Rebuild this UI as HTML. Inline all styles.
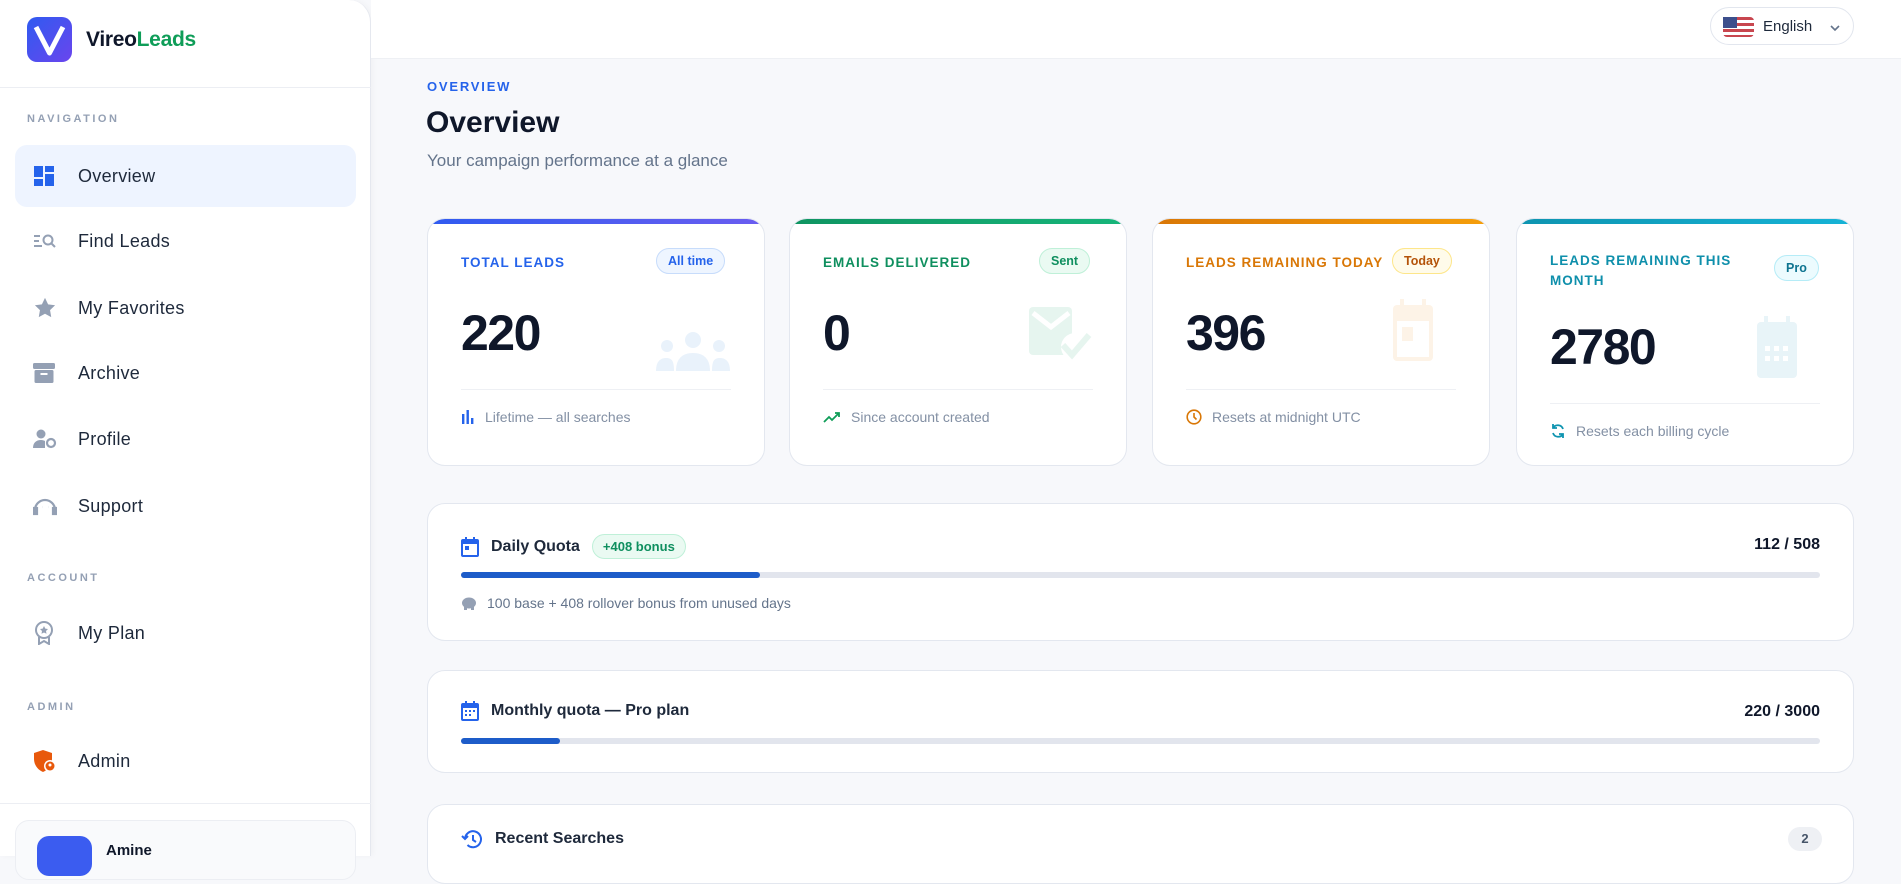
<!DOCTYPE html>
<html><head><meta charset="utf-8"><style>
*{box-sizing:border-box;margin:0;padding:0}
body{width:1901px;height:856px;overflow:hidden;background:#f7f8fb;font-family:"Liberation Sans",Arial,sans-serif;color:#0f172a;position:relative}
.side{position:absolute;left:0;top:0;width:371px;height:856px;background:#fff;border-right:1px solid #e5e8ef;border-radius:0 22px 0 0;box-shadow:2px 0 6px rgba(0,0,0,.03)}
.logo{position:absolute;left:27px;top:17px;width:45px;height:45px;border-radius:10px;background:linear-gradient(135deg,#2f5bf0,#6a45ee)}
.brand{position:absolute;left:86px;top:28px;font-size:21px;font-weight:700;letter-spacing:-.3px}
.sep{position:absolute;left:0;width:371px;height:1px;background:#eceef3}
.lbl{position:absolute;left:27px;font-size:11px;font-weight:700;letter-spacing:2.5px;color:#94a0b4}
.item{position:absolute;left:15px;width:341px;height:62px;border-radius:12px;display:flex;align-items:center;font-size:18px;color:#1e293b;letter-spacing:.3px}
.item.act{background:#eef4ff}
.item svg{position:absolute;left:18px}
.item span{position:absolute;left:63px}
.top{position:absolute;left:371px;top:0;right:0;height:59px;background:#fff;border-bottom:1px solid #eef0f4}
.lang{position:absolute;left:1710px;top:7px;width:144px;height:38px;border:1px solid #e2e6ee;border-radius:19px;background:#fff;font-size:15px;color:#1e293b}
.card{position:absolute;background:#fff;border:1px solid #e3e7ef;border-radius:18px;overflow:hidden}
.card .bar{position:absolute;left:0;right:0;top:0;height:5px}
.clabel{position:absolute;left:33px;font-size:13.5px;font-weight:700;letter-spacing:1px}
.pill{position:absolute;font-size:12.5px;font-weight:700;border-radius:13px;padding:5px 11px;border:1px solid}
.num{position:absolute;left:33px;font-size:50px;font-weight:700;letter-spacing:-1.5px;color:#0f172a}
.div{position:absolute;left:33px;right:33px;height:1px;background:#eef0f4}
.foot{position:absolute;left:33px;font-size:14px;color:#8390a4;display:flex;align-items:center;gap:10px}
.wide .t{position:absolute;left:33px;font-size:16px;font-weight:700;color:#1e293b;display:flex;align-items:center;gap:12px}
.track{position:absolute;left:33px;right:33px;height:6px;background:#e2e5ed;border-radius:3px}
.fill{height:6px;background:#1d5cc9;border-radius:3px}
</style></head><body>
<div class="side">
<div class="logo"><svg width="45" height="45" viewBox="0 0 45 45"><path d="M9 10 L22.5 36 L36 10" fill="none" stroke="#fff" stroke-width="5" stroke-linejoin="round"/></svg></div>
<div class="brand">Vireo<span style="color:#0f9d58">Leads</span></div>
<div class="sep" style="top:87px"></div>
<div class="lbl" style="top:113px">NAVIGATION</div>
<div class="item act" style="top:145px"><svg width="22" height="22" viewBox="0 0 22 22" fill="#2563eb"><rect x="1" y="1" width="9" height="11"/><rect x="12" y="1" width="9" height="6"/><rect x="1" y="14" width="9" height="7"/><rect x="12" y="9" width="9" height="12"/></svg><span>Overview</span></div>
<div class="item" style="top:210px"><svg width="24" height="16" viewBox="0 0 24 16" fill="none" stroke="#94a0b4" stroke-width="2"><path d="M1 3h6M1 8h5M1 13h8"/><circle cx="15" cy="7" r="4.5"/><path d="M18 10l4 4"/></svg><span>Find Leads</span></div>
<div class="item" style="top:277px"><svg width="24" height="22" viewBox="0 0 24 24" fill="#94a0b4"><path d="M12 1l3.4 7 7.6 1-5.5 5.3 1.3 7.7L12 18.3 5.2 22l1.3-7.7L1 9l7.6-1z"/></svg><span>My Favorites</span></div>
<div class="item" style="top:342px"><svg width="22" height="22" viewBox="0 0 22 22" fill="#94a0b4"><rect x="0" y="1" width="22" height="6" rx="1.5"/><rect x="1.5" y="8" width="19" height="13" rx="1.5"/><rect x="7.5" y="11" width="7" height="2" fill="#fff"/></svg><span>Archive</span></div>
<div class="item" style="top:408px"><svg width="24" height="20" viewBox="0 0 24 20" fill="#94a0b4"><circle cx="8" cy="5" r="4.5"/><path d="M0 19c0-5 3-8 8-8 2 0 3 .5 4 1v7z"/><circle cx="18" cy="14" r="4" fill="none" stroke="#94a0b4" stroke-width="2.2"/></svg><span>Profile</span></div>
<div class="item" style="top:475px"><svg width="24" height="20" viewBox="0 0 24 20" fill="none" stroke="#94a0b4" stroke-width="2.2"><path d="M2 14a10 10 0 0 1 20 0"/><rect x="1" y="12" width="3" height="6" fill="#94a0b4"/><rect x="20" y="12" width="3" height="6" fill="#94a0b4"/><path d="M9 11h.1M15 11h.1"/></svg><span>Support</span></div>
<div class="lbl" style="top:572px">ACCOUNT</div>
<div class="item" style="top:602px"><svg width="22" height="24" viewBox="0 0 22 24" fill="none" stroke="#94a0b4" stroke-width="2"><circle cx="11" cy="9" r="8"/><path d="M6 16v7l5-3 5 3v-7"/><path d="M11 5l1.3 2.6 2.7.4-2 2 .5 2.8L11 11.5 8.5 12.8 9 10 7 8l2.7-.4z" fill="#94a0b4" stroke="none"/></svg><span>My Plan</span></div>
<div class="lbl" style="top:701px">ADMIN</div>
<div class="item" style="top:730px"><svg width="24" height="22" viewBox="0 0 24 22" fill="#e8590c"><path d="M10 0l9 3v6c0 6-4 11-9 13C5 20 1 15 1 9V3z"/><circle cx="17" cy="16" r="6" fill="#fff"/><circle cx="17" cy="16" r="4.5"/><circle cx="17" cy="15" r="1.5" fill="#fff"/></svg><span>Admin</span></div>
<div class="sep" style="top:803px"></div>
<div style="position:absolute;left:15px;top:820px;width:341px;height:60px;border:1px solid #eceef3;border-radius:14px;background:#f9fafc"></div>
<div style="position:absolute;left:37px;top:836px;width:55px;height:40px;border-radius:12px;background:#3b5cf0"></div>
<div style="position:absolute;left:106px;top:842px;font-size:15px;font-weight:700">Amine</div>
</div>
<div class="top"></div>
<div class="lang"><div style="position:absolute;left:12px;top:9px;width:31px;height:20px;border-radius:4px;background:repeating-linear-gradient(#c8464f 0 3px,#fff 3px 6px)"><div style="width:14px;height:11px;background:#3c4f8c"></div></div><span style="position:absolute;left:52px;top:10px">English</span><svg style="position:absolute;left:118px;top:16px" width="12" height="8" viewBox="0 0 12 8" fill="none" stroke="#64748b" stroke-width="1.6"><path d="M2 2l4 4 4-4"/></svg></div>

<div style="position:absolute;left:427px;top:79px;font-size:13px;font-weight:700;letter-spacing:1.8px;color:#2563eb">OVERVIEW</div>
<div style="position:absolute;left:426px;top:106px;font-size:30px;font-weight:700;color:#0f172a">Overview</div>
<div style="position:absolute;left:427px;top:151px;font-size:17px;color:#64748b">Your campaign performance at a glance</div>

<div class="card" style="left:427px;top:218px;width:338px;height:248px"><div class="bar" style="background:linear-gradient(90deg,#2f5bf0,#6a5cf0)"></div>
<div class="clabel" style="top:36px;color:#2563eb">TOTAL LEADS</div><div class="pill" style="left:228px;top:29px;color:#2563eb;background:#eef5ff;border-color:#c7dcfb">All time</div>
<div class="num" style="top:85px">220</div>
<svg style="position:absolute;left:228px;top:112px" width="74" height="40" viewBox="0 0 74 40" fill="#e9f2fb"><circle cx="37" cy="9" r="8"/><circle cx="11" cy="15" r="6"/><circle cx="63" cy="15" r="6"/><path d="M20 40c0-12 6-18 17-18s17 6 17 18z"/><path d="M0 40c0-9 4-13 10-13s8 3 8 13z"/><path d="M56 40c0-10 2-13 8-13s10 4 10 13z"/></svg>
<div class="div" style="top:170px"></div>
<div class="foot" style="top:190px"><svg width="14" height="14" viewBox="0 0 14 14" fill="#2563eb"><rect x="1" y="4" width="2.4" height="10"/><rect x="5.5" y="0" width="2.4" height="14"/><rect x="10" y="8" width="2.4" height="6"/></svg>Lifetime — all searches</div></div>

<div class="card" style="left:789px;top:218px;width:338px;height:248px"><div class="bar" style="background:linear-gradient(90deg,#0f9461,#17b57a)"></div>
<div class="clabel" style="top:36px;color:#0f8f5f">EMAILS DELIVERED</div><div class="pill" style="left:249px;top:29px;color:#0f8f5f;background:#eafaf2;border-color:#bff0d8">Sent</div>
<div class="num" style="top:85px">0</div>
<svg style="position:absolute;left:239px;top:88px" width="66" height="56" viewBox="0 0 66 56" fill="#e6f5ef"><rect x="0" y="0" width="43" height="48" rx="4"/><path d="M4 6l18 14 18-14" fill="none" stroke="#fff" stroke-width="5"/><circle cx="46" cy="40" r="14" fill="#fff"/><path d="M34 38l9 10 17-20" fill="none" stroke="#e6f5ef" stroke-width="6"/></svg>
<div class="div" style="top:170px"></div>
<div class="foot" style="top:190px"><svg width="18" height="12" viewBox="0 0 18 12" fill="none" stroke="#0f9d58" stroke-width="1.8"><path d="M1 11l5-5 3 3 7-7M12 2h4v4"/></svg>Since account created</div></div>

<div class="card" style="left:1152px;top:218px;width:338px;height:248px"><div class="bar" style="background:linear-gradient(90deg,#d97706,#f59e0b)"></div>
<div class="clabel" style="top:36px;color:#d97706">LEADS REMAINING TODAY</div><div class="pill" style="left:239px;top:29px;color:#b45309;background:#fffbea;border-color:#fde68a">Today</div>
<div class="num" style="top:85px">396</div>
<svg style="position:absolute;left:240px;top:80px" width="40" height="62" viewBox="0 0 40 62" fill="#fdf3e7"><rect x="7" y="0" width="4" height="8"/><rect x="29" y="0" width="4" height="8"/><rect x="0" y="6" width="40" height="56" rx="4"/><rect x="4" y="22" width="32" height="36" fill="#fff"/><rect x="9" y="28" width="11" height="14"/></svg>
<div class="div" style="top:170px"></div>
<div class="foot" style="top:190px"><svg width="16" height="16" viewBox="0 0 16 16" fill="none" stroke="#d97706" stroke-width="1.6"><circle cx="8" cy="8" r="6.8"/><path d="M8 4v4l2.5 2.5"/></svg>Resets at midnight UTC</div></div>

<div class="card" style="left:1516px;top:218px;width:338px;height:248px"><div class="bar" style="background:linear-gradient(90deg,#0e94b0,#16b3d6)"></div>
<div class="clabel" style="top:32px;color:#0e8fab;line-height:20px">LEADS REMAINING THIS<br>MONTH</div><div class="pill" style="left:257px;top:36px;color:#0e7490;background:#ecfbfe;border-color:#b5ecf7">Pro</div>
<div class="num" style="top:99px">2780</div>
<svg style="position:absolute;left:240px;top:97px" width="40" height="62" viewBox="0 0 40 62" fill="#e8f4f8"><rect x="7" y="0" width="4" height="8"/><rect x="29" y="0" width="4" height="8"/><rect x="0" y="6" width="40" height="56" rx="4"/><g fill="#fff"><rect x="8" y="30" width="5" height="5"/><rect x="17" y="30" width="5" height="5"/><rect x="26" y="30" width="5" height="5"/><rect x="8" y="40" width="5" height="5"/><rect x="17" y="40" width="5" height="5"/><rect x="26" y="40" width="5" height="5"/></g></svg>
<div class="div" style="top:184px"></div>
<div class="foot" style="top:204px"><svg width="16" height="16" viewBox="0 0 16 16" fill="none" stroke="#0e94b0" stroke-width="1.8"><path d="M13 6A5.5 5.5 0 0 0 3 5M3 10a5.5 5.5 0 0 0 10 1M3 1v4h4M13 15v-4H9"/></svg>Resets each billing cycle</div></div>

<div class="card wide" style="left:427px;top:503px;width:1427px;height:138px">
<div class="t" style="top:30px"><svg width="18" height="20" viewBox="0 0 18 20" fill="#2563eb"><rect x="0" y="2" width="18" height="18" rx="2"/><rect x="2" y="7" width="14" height="11" fill="#fff"/><rect x="4" y="0" width="2" height="4"/><rect x="12" y="0" width="2" height="4"/><rect x="4" y="9" width="4" height="4"/></svg><span style="font-weight:600">Daily Quota</span><span style="font-size:13px;color:#0f8f5f;background:#eafaf2;border:1px solid #bff0d8;border-radius:13px;padding:4px 10px">+408 bonus</span></div>
<div style="position:absolute;right:33px;top:32px;font-size:16px;font-weight:700">112 / 508</div>
<div class="track" style="top:68px"><div class="fill" style="width:22%"></div></div>
<div class="foot" style="top:91px;color:#64748b"><svg width="16" height="14" viewBox="0 0 16 14" fill="#94a0b4"><ellipse cx="8" cy="7" rx="7" ry="5.5"/><rect x="3" y="10" width="3" height="4"/><rect x="10" y="10" width="3" height="4"/></svg>100 base + 408 rollover bonus from unused days</div>
</div>

<div class="card wide" style="left:427px;top:670px;width:1427px;height:103px">
<div class="t" style="top:30px"><svg width="18" height="20" viewBox="0 0 18 20" fill="#2563eb"><rect x="0" y="2" width="18" height="18" rx="2"/><rect x="2" y="7" width="14" height="11" fill="#fff"/><rect x="4" y="0" width="2" height="4"/><rect x="12" y="0" width="2" height="4"/><g><rect x="4" y="9" width="2" height="2"/><rect x="8" y="9" width="2" height="2"/><rect x="12" y="9" width="2" height="2"/><rect x="4" y="13" width="2" height="2"/><rect x="8" y="13" width="2" height="2"/></g></svg><span style="font-weight:600">Monthly quota — Pro plan</span></div>
<div style="position:absolute;right:33px;top:32px;font-size:16px;font-weight:700">220 / 3000</div>
<div class="track" style="top:67px"><div class="fill" style="width:7.3%"></div></div>
</div>

<div class="card wide" style="left:427px;top:804px;width:1427px;height:80px">
<div class="t" style="top:24px"><svg width="22" height="20" viewBox="0 0 22 20" fill="none" stroke="#2563eb" stroke-width="2"><path d="M4 10a8 8 0 1 1 2.5 6M1 7l3 3 3-3M12 6v5l3 2"/></svg>Recent Searches</div>
<div style="position:absolute;right:31px;top:22px;width:34px;height:24px;border-radius:12px;background:#eef0f4;font-size:13px;font-weight:700;text-align:center;line-height:24px;color:#475569">2</div>
</div>
</body></html>
